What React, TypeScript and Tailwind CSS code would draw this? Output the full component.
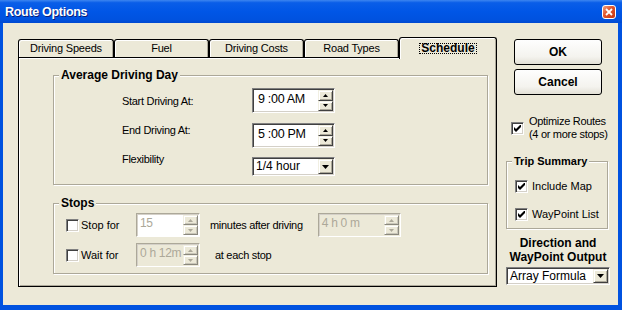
import React from 'react';

const face = 'bg-[#ece9d8]';
const sunken =
  'border border-t-[#808080] border-l-[#808080] border-b-white border-r-white shadow-[inset_1px_1px_0_#404040,inset_-1px_-1px_0_#d4d0c8]';
const sunkenOff =
  'border border-t-[#aca899] border-l-[#aca899] border-b-white border-r-white shadow-[inset_1px_1px_0_#d4d0c8]';
const raised =
  'border border-t-[#f1efe2] border-l-[#f1efe2] border-b-[#404040] border-r-[#404040] shadow-[inset_1px_1px_0_#fff,inset_-1px_-1px_0_#aca899]';
const raisedOff =
  'border border-t-[#f1efe2] border-l-[#f1efe2] border-b-[#8a887e] border-r-[#8a887e] shadow-[inset_1px_1px_0_#fff,inset_-1px_-1px_0_#c9c6b8]';

const Arrow: React.FC<{ down?: boolean; off?: boolean; big?: boolean }> = ({ down, off, big }) => {
    const w = big ? 7 : 5;
    const h = big ? 4 : 3;
    const d = down ? `M0 0h${w}L${w / 2} ${h}z` : `M${w / 2} 0L${w} ${h}H0z`;
    return (
        <svg width={w} height={h} viewBox={`0 0 ${w} ${h}`}>
            <path d={d} fill={off ? '#aca899' : '#000'} />
        </svg>
    );
};

const Spin: React.FC<{ off?: boolean }> = ({ off }) => (
    <div className="flex flex-col w-[15px] shrink-0">
        <div className={`flex-1 flex items-center justify-center ${face} ${off ? raisedOff : raised}`}>
            <Arrow off={off} />
        </div>
        <div className={`flex-1 flex items-center justify-center ${face} ${off ? raisedOff : raised}`}>
            <Arrow down off={off} />
        </div>
    </div>
);

const Check: React.FC<{ on?: boolean }> = ({ on }) => (
    <span className={`flex items-center justify-center w-[13px] h-[13px] shrink-0 bg-white ${sunken}`}>
        {on && (
            <svg width="7" height="7" viewBox="0 0 7 7">
                <polygon points="0,2 2,4 7,-1 7,2 2,7 0,5" fill="#000" />
            </svg>
        )}
    </span>
);

const Combo: React.FC<{ value: string; size: string }> = ({ value, size }) => (
    <div className={`${size} flex bg-white p-px ${sunken}`}>
        <span className="flex-1 pl-[2px] text-[12px] leading-[15px] whitespace-nowrap overflow-hidden">{value}</span>
        <div className={`w-[15px] flex items-center justify-center ${face} ${raised}`}>
            <Arrow down big />
        </div>
    </div>
);

const TimeSpin: React.FC<{ value: string }> = ({ value }) => (
    <div className={`w-[83px] h-[25px] flex bg-white p-px ${sunken}`}>
        <span className="flex-1 pl-[4px] pt-[2px] text-[12.5px] leading-[15px] tracking-[-0.3px]">{value}</span>
        <Spin />
    </div>
);

const OffSpin: React.FC<{ value: string; size: string; bg: string }> = ({ value, size, bg }) => (
    <div className={`${size} flex p-px ${bg} ${sunkenOff}`}>
        <span className="flex-1 pl-[2px] pt-[1px] text-[12px] leading-[14px] text-[#aca899] whitespace-nowrap">{value}</span>
        <Spin off />
    </div>
);

const Group: React.FC<{ title: string; size: string; titleSize: string; children: React.ReactNode }> = ({ title, size, titleSize, children }) => (
    <div className={`relative border border-[#aca899] shadow-[inset_1px_1px_0_#fff,1px_1px_0_#fff] ${size}`}>
        <span className={`absolute -top-[8px] left-[5px] px-[2px] ${face} font-bold leading-[14px] ${titleSize}`}>{title}</span>
        {children}
    </div>
);

const Tab: React.FC<{ label: string; size: string }> = ({ label, size }) => (
    <div className={`${size} h-[18px] flex items-center justify-center border border-b-0 border-black rounded-t-[3px] shadow-[inset_1px_1px_0_#fff,inset_-1px_0_0_#aca899] text-[11px] tracking-[-0.2px]`}>
        {label}
    </div>
);

const XpButton: React.FC<{ label: string; extra: string }> = ({ label, extra }) => (
    <div className={`${extra} ml-[8px] w-[88px] h-[26px] flex items-center justify-center rounded-[3px] border border-black bg-[linear-gradient(to_bottom,#fefefe,#f4f3ee_70%,#e3e1d6)] font-bold text-[12px]`}>
        {label}
    </div>
);

export default function App() {
    return (
        <div className="w-[622px] h-[310px] flex flex-col bg-[#0052e0] overflow-hidden font-['Liberation_Sans',Arial,sans-serif] text-black">
            <div className="h-[23px] shrink-0 flex items-center justify-between pl-[5px] pr-[6px] bg-[linear-gradient(to_bottom,#3d86f0_0%,#0a5ee8_12%,#0056e6_50%,#0052df_85%,#0049d0_100%)]">
                <span className="text-white font-bold text-[12.5px] leading-[14px] tracking-[-0.3px] [text-shadow:1px_1px_0_#0a1e78]">Route Options</span>
                <div className="w-[14px] h-[14px] flex items-center justify-center rounded-[3px] border border-white bg-[linear-gradient(135deg,#f0a080,#e0542c_45%,#c4340f)]">
                    <svg width="8" height="8" viewBox="0 0 8 8">
                        <path d="M1 1l6 6M7 1L1 7" stroke="#fff" strokeWidth="1.8" />
                    </svg>
                </div>
            </div>

            <div className={`flex-1 ml-[3px] mr-[4px] mb-[5px] flex pl-[15px] pt-[14px] ${face}`}>
                {/* tabs + page */}
                <div className="w-[479px] flex flex-col">
                    <div className="h-[20px] flex items-end">
                        <Tab label="Driving Speeds" size="w-[96px]" />
                        <Tab label="Fuel" size="w-[95px]" />
                        <Tab label="Driving Costs" size="w-[95px]" />
                        <Tab label="Road Types" size="w-[95px]" />
                        <div className={`relative z-10 w-[98px] h-[22px] -mb-[2px] flex justify-center pt-[5px] border border-b-0 border-black rounded-t-[3px] shadow-[inset_1px_1px_0_#fff,inset_-1px_0_0_#aca899] ${face}`}>
                            <span className="h-[11px] px-px border border-dotted border-black font-bold text-[12px] leading-[9px]">Schedule</span>
                        </div>
                    </div>

                    <div className="h-[230px] flex flex-col pl-[34px] pt-[17px] border border-black shadow-[inset_1px_1px_0_#fff,inset_-1px_-1px_0_#aca899]">
                        <Group title="Average Driving Day" size="w-[435px] h-[110px]" titleSize="text-[12px]">
                            <div className="flex pl-[68px]">
                                <div className="w-[130px] flex flex-col gap-[16px] pt-[19px] text-[11px] leading-[13px] tracking-[-0.3px]">
                                    <span>Start Driving At:</span>
                                    <span>End Driving At:</span>
                                    <span>Flexibility</span>
                                </div>
                                <div className="flex flex-col pt-[12px]">
                                    <TimeSpin value="9 :00 AM" />
                                    <div className="mt-[10px]">
                                        <TimeSpin value="5 :00 PM" />
                                    </div>
                                    <div className="mt-[9px]">
                                        <Combo value="1/4 hour" size="w-[83px] h-[19px]" />
                                    </div>
                                </div>
                            </div>
                        </Group>

                        <div className="mt-[18px]">
                            <Group title="Stops" size="w-[435px] h-[71px]" titleSize="text-[12px]">
                                <div className="flex flex-col gap-[6px] pl-[12px] pt-[9px] text-[11px] tracking-[-0.3px]">
                                    <div className="flex items-center h-[24px]">
                                        <div className="w-[70px] flex items-center gap-[2px]">
                                            <Check />
                                            <span className="tracking-normal">Stop for</span>
                                        </div>
                                        <OffSpin value="15" size="w-[64px] h-[24px]" bg="bg-white" />
                                        <span className="ml-[10px]">minutes after driving</span>
                                        <div className="ml-[15px]">
                                            <OffSpin value="4 h  0 m" size="w-[83px] h-[24px]" bg={face} />
                                        </div>
                                    </div>
                                    <div className="flex items-center h-[24px]">
                                        <div className="w-[70px] flex items-center gap-[2px]">
                                            <Check />
                                            <span className="tracking-normal">Wait for</span>
                                        </div>
                                        <OffSpin value="0 h 12m" size="w-[64px] h-[24px]" bg={face} />
                                        <span className="ml-[15px]">at each stop</span>
                                    </div>
                                </div>
                            </Group>
                        </div>
                    </div>
                </div>

                {/* right column */}
                <div className="ml-[9px] w-[104px] flex flex-col">
                    <XpButton label="OK" extra="mt-[2px]" />
                    <XpButton label="Cancel" extra="mt-[4px]" />

                    <div className="mt-[20px] pl-[5px] flex items-center gap-[5px]">
                        <Check on />
                        <div className="flex flex-col text-[11px] leading-[13px] tracking-[-0.3px]">
                            <span>Optimize Routes</span>
                            <span>(4 or more stops)</span>
                        </div>
                    </div>

                    <div className="mt-[20px]">
                        <Group title="Trip Summary" size="w-[102px] h-[68px]" titleSize="text-[11px]">
                            <div className="flex flex-col gap-[15px] pl-[8px] pt-[18px] text-[11px]">
                                <div className="flex items-center gap-[4px] h-[13px]">
                                    <Check on />
                                    <span>Include Map</span>
                                </div>
                                <div className="flex items-center gap-[4px] h-[13px]">
                                    <Check on />
                                    <span>WayPoint List</span>
                                </div>
                            </div>
                        </Group>
                    </div>

                    <div className="mt-[7px] text-center font-bold text-[12px] leading-[14px]">
                        <div>Direction and</div>
                        <div>WayPoint Output</div>
                    </div>
                    <div className="mt-[3px]">
                        <Combo value="Array Formula" size="w-[104px] h-[18px]" />
                    </div>
                </div>
            </div>
        </div>
    );
}
